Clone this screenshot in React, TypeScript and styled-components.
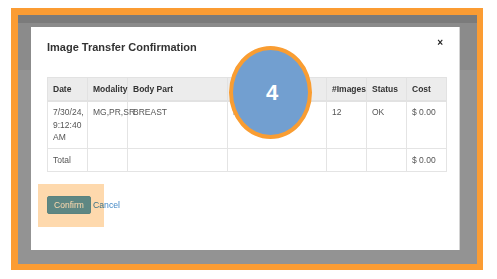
import React from 'react';
import styled, { createGlobalStyle } from 'styled-components';

const GlobalStyle = createGlobalStyle`
    html, body {
        margin: 0;
        padding: 0;
        background: #fff;
        font-family: "Liberation Sans", Arial, sans-serif;
    }
`;

const Frame = styled.div`
    margin: 8px 0 0 11px;
    width: 472px;
    height: 262px;
    box-sizing: border-box;
    border-style: solid;
    border-color: #fb9c33;
    border-width: 7px 6px 6px 7px;
    background: linear-gradient(to bottom, #7b7b7b 0 8px, #8b8b8b 8px 55px, #939393 55px);
    padding: 12px 17px 14px 13px;
    display: flex;
`;

const Modal = styled.div`
    position: relative;
    flex: 1;
    min-width: 0;
    background: #fff;
    border-right: 1px solid #d4d4d4;
    padding: 14px 15px 0 16px;
    display: flex;
    flex-direction: column;
`;

const ModalHeader = styled.div`
    display: flex;
    justify-content: space-between;
    align-items: flex-start;
    height: 36px;
`;

const Title = styled.h4`
    margin: 0;
    font-size: 11px;
    line-height: 13px;
    font-weight: bold;
    color: #333;
`;

const Close = styled.span`
    font-size: 10px;
    line-height: 10px;
    font-weight: bold;
    color: #222;
    margin: -3px 1px 0 0;
`;

const Table = styled.table`
    width: 398px;
    table-layout: fixed;
    border-collapse: collapse;
    font-size: 8.5px;
    line-height: 12.6px;
    color: #555;
`;

const Th = styled.th`
    background: #ececec;
    text-align: left;
    font-weight: bold;
    color: #333;
    padding: 4.5px 5px;
    border: 1px solid #e2e2e2;
    border-bottom: 2px solid #e2e2e2;
    white-space: nowrap;
    overflow: visible;
`;

const Td = styled.td`
    vertical-align: top;
    padding: 4.5px 5px;
    border: 1px solid #e4e4e4;
`;

const Footer = styled.div`
    position: relative;
    margin-top: 24px;
    display: flex;
    align-items: center;
    gap: 2px;
`;

const ConfirmButton = styled.button`
    width: 44px;
    height: 18px;
    padding: 0;
    border: 1px solid #5a9abb;
    border-radius: 2px;
    background: #5e9fc1;
    color: #fff;
    font-family: inherit;
    font-size: 8.5px;
`;

const CancelLink = styled.a`
    font-size: 8.7px;
    color: #3f86c4;
    text-decoration: none;
`;

const Highlight = styled.div`
    position: absolute;
    left: -9px;
    top: -12px;
    width: 66px;
    height: 43px;
    background: #fed9ad;
    mix-blend-mode: multiply;
    pointer-events: none;
`;

const StepBadge = styled.div`
    position: absolute;
    left: 198px;
    top: 19px;
    width: 83px;
    height: 93px;
    box-sizing: border-box;
    border-radius: 50%;
    border: 4px solid #f99d32;
    background: #729fd0;
    display: flex;
    align-items: center;
    justify-content: center;
    color: #fff;
    font-size: 22px;
    font-weight: bold;
    padding-left: 3px;
`;

const columns = [40, 40, 100, 99, 40, 40, 40];

const App = () => (
    <>
        <GlobalStyle />
        <Frame>
            <Modal>
                <ModalHeader>
                    <Title>Image Transfer Confirmation</Title>
                    <Close>×</Close>
                </ModalHeader>
                <Table>
                    <colgroup>
                        {columns.map((w, i) => (
                            <col key={i} style={{ width: w }} />
                        ))}
                    </colgroup>
                    <thead>
                        <tr>
                            <Th>Date</Th>
                            <Th>Modality</Th>
                            <Th>Body Part</Th>
                            <Th>Facility</Th>
                            <Th>#Images</Th>
                            <Th>Status</Th>
                            <Th>Cost</Th>
                        </tr>
                    </thead>
                    <tbody>
                        <tr>
                            <Td>7/30/24, 9:12:40 AM</Td>
                            <Td>MG,PR,SR</Td>
                            <Td>BREAST</Td>
                            <Td>Main</Td>
                            <Td>12</Td>
                            <Td>OK</Td>
                            <Td>$ 0.00</Td>
                        </tr>
                        <tr>
                            <Td>Total</Td>
                            <Td />
                            <Td />
                            <Td />
                            <Td />
                            <Td />
                            <Td>$ 0.00</Td>
                        </tr>
                    </tbody>
                </Table>
                <Footer>
                    <ConfirmButton>Confirm</ConfirmButton>
                    <CancelLink href="#">Cancel</CancelLink>
                    <Highlight />
                </Footer>
                <StepBadge>4</StepBadge>
            </Modal>
        </Frame>
    </>
);

export default App;
